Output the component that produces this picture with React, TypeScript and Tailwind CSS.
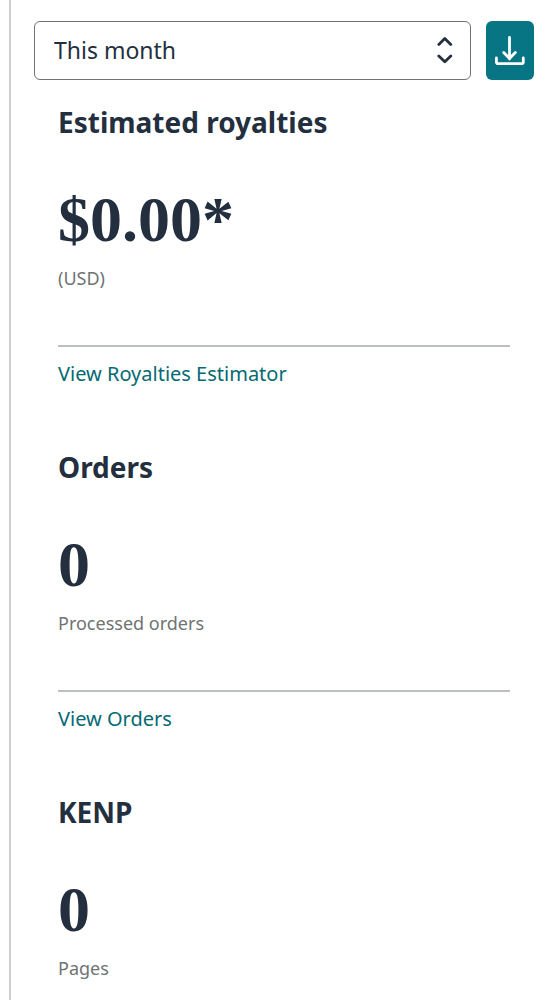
import { useState } from 'react'

interface Stat {
  title: string
  value: string
  caption: string
  link?: string
}

const STATS: Stat[] = [
  { title: 'Estimated royalties', value: '$0.00*', caption: '(USD)', link: 'View Royalties Estimator' },
  { title: 'Orders', value: '0', caption: 'Processed orders', link: 'View Orders' },
  { title: 'KENP', value: '0', caption: 'Pages' },
]

function StatSection({ title, value, caption, link }: Stat) {
  return (
    <section>
      <h2 className="text-[28px] leading-9 font-bold">{title}</h2>
      <p className="mt-11 font-['Liberation_Serif',serif] text-[64px] leading-[72px] font-bold">{value}</p>
      <p className="mt-2 text-[18px] leading-7 text-[#6f7373]">{caption}</p>
      {link && (
        <div className="mt-[53px] border-t-2 border-[#bcc0c1] pt-[13px]">
          <a href="#" className="block text-[20px] leading-7 text-[#056a73] hover:underline">
            {link}
          </a>
        </div>
      )}
    </section>
  )
}

export default function App() {
  const [period, setPeriod] = useState('This month')

  return (
    <div className="min-h-screen bg-white pl-[9px]">
      <main className="min-h-screen border-l-2 border-[#cfcfcf] pt-[21px] pr-[22px] pl-[23px] font-['Noto_Sans',sans-serif] text-[#232f3e]">
        {/* Period picker and export */}
        <div className="flex gap-[15px]">
          <div className="relative flex-1">
            <select
              aria-label="Period"
              value={period}
              onChange={(e) => setPeriod(e.target.value)}
              className="h-[59px] w-full appearance-none rounded-md border border-[#6f7373] bg-white pr-14 pl-[19px] text-[23px] text-[#232f3e]"
            >
              <option>This month</option>
              <option>Last month</option>
            </select>
            <svg
              className="pointer-events-none absolute top-4 right-[17px] h-7 w-[18px]"
              viewBox="0 0 18 28"
              fill="none"
              stroke="#232f3e"
              strokeWidth="2.8"
              strokeLinecap="round"
              strokeLinejoin="round"
              aria-hidden="true"
            >
              <path d="M2.8 7.4 8.8 1.6l6 5.8M2.8 19l6 5.8 6-5.8" />
            </svg>
          </div>
          <button
            aria-label="Download report"
            className="flex h-[59px] w-12 items-center justify-center rounded-md bg-[#077584] hover:bg-[#056a73]"
          >
            <svg
              className="h-8 w-8"
              viewBox="0 0 32 32"
              fill="none"
              stroke="white"
              strokeWidth="2.8"
              strokeLinecap="round"
              strokeLinejoin="round"
              aria-hidden="true"
            >
              <path d="M15.5 2.5v21.5M9.7 17.5l5.8 6 5.8-6M2.4 23v4.2a1.5 1.5 0 0 0 1.5 1.5h23.9a1.5 1.5 0 0 0 1.5-1.5V23" />
            </svg>
          </button>
        </div>

        <div className="flex flex-col gap-[61px] px-6 pt-6">
          {STATS.map((stat) => (
            <StatSection key={stat.title} {...stat} />
          ))}
        </div>
      </main>
    </div>
  )
}
